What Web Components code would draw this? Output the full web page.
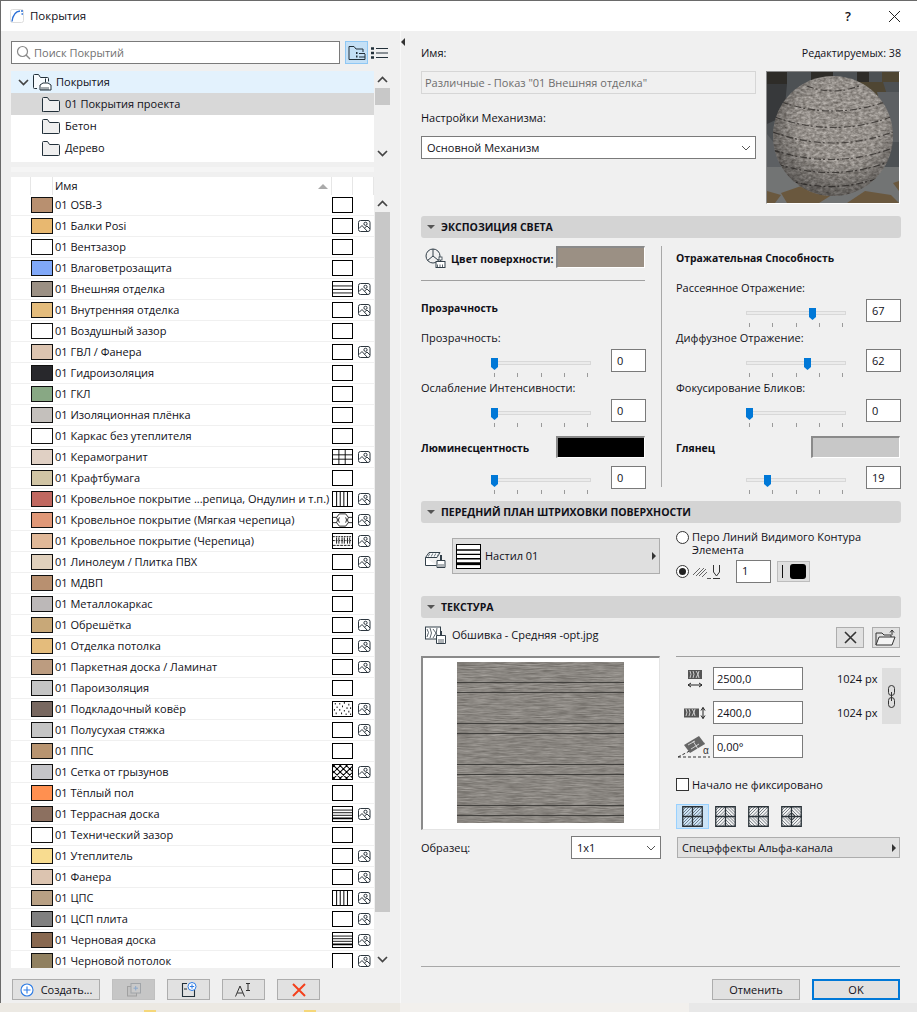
<!DOCTYPE html>
<html lang="ru">
<head>
<meta charset="utf-8">
<title>Покрытия</title>
<style>
html, body { margin: 0; height: 1012px; overflow: hidden; }
body {
    font: 11px/16px "Open Sans", "Liberation Sans", sans-serif; color: #101018;
    background:
        linear-gradient(#f5d77a, #f5d77a) 144px 1010px / 12px 2px no-repeat,
        linear-gradient(#f5d77a, #f5d77a) 304px 1010px / 12px 2px no-repeat,
        linear-gradient(90deg, #ece9e3 0 400px, #f2f0ed 400px 689px, #e8e8e8 689px);
}
</style>
</head>
<body>

<x-dialog>
  <x-sidebar slot="left"></x-sidebar>
  <x-settings slot="right"></x-settings>
</x-dialog>

<script>
const ICONS = {
    logo: [14, 14, `<rect x=".5" y=".5" width="13" height="13" rx="2" fill="#fff" stroke="#ddd"/><path d="M2 12.500C2.800 6.500 5.500 2.500 10 2" fill="none" stroke="#2b6fd6" stroke-width="1.400"/><path d="M11 2h2M11.500 5h1.500" stroke="#2b6fd6" stroke-width="1.300"/>`],
    search: [15, 15, `<circle cx="6.500" cy="6.500" r="5" fill="none" stroke="#8a8a8a" stroke-width="1.200"/><path d="M10 10l4 4" stroke="#8a8a8a" stroke-width="1.400"/>`],
    treemode: [18, 16, `<path d="M1 14.500V1.500h5l2 2.500h7v3M1 14.500h16V9" fill="none" stroke="#22303a"/><path d="M8 8h1.500M8 11.500h1.500" stroke="#22303a" stroke-width="2"/><path d="M11 8.500h6M11 12h6" stroke="#22303a"/>`],
    listmode: [17, 12, `<path d="M0 1.500h3M0 6h3M0 10.500h3" stroke="#22303a" stroke-width="2.400"/><path d="M5 1.500h12M5 6h12M5 10.500h12" stroke="#22303a"/>`],
    chevdown: [11, 7, `<path d="M1 1l4.500 4.500L10 1" fill="none" stroke="#444" stroke-width="1.700"/>`],
    chevup: [11, 7, `<path d="M1 6l4.500-4.500L10 6" fill="none" stroke="#444" stroke-width="1.700"/>`],
    folder: [18, 15, `<path d="M.5 14.500V1.500Q.5.500 1.500.500h4l2 3h9q1 0 1 1v9q0 1-1 1H1.500q-1 0-1-1z" fill="#efefef" stroke="#22303a"/>`],
    rootfolder: [19, 17, `<path d="M4 14.500H1.500q-1 0-1-1V1.500q0-1 1-1h4l2 3h7q1 0 1 1v3" fill="#f7fbfe" stroke="#22303a"/><path d="M12.500 4.500v4M10 9h5l3 2v5H7v-5z" fill="#fff" stroke="#22303a"/><path d="M9 13v3M11 13v3M13 13v3M15 13v3" stroke="#22303a" stroke-width=".8"/>`],
    image: [13, 12, `<rect x=".5" y=".5" width="11.500" height="11" rx="2" fill="#fff" stroke="#2c363e"/><circle cx="7.500" cy="3.800" r="1.600" fill="none" stroke="#2c363e"/><path d="M1 8.500L4 5.500l5.500 6M6.500 8l2.500-2 3 3" fill="none" stroke="#2c363e"/>`],
    plus: [14, 14, `<circle cx="7" cy="7" r="6" fill="#fff" stroke="#2c7be5" stroke-width="1.100"/><path d="M7 3.500v7M3.500 7h7" stroke="#2c7be5" stroke-width="1.100"/>`],
    dup: [14, 14, `<rect x=".5" y="3.500" width="9" height="9.500" fill="#c2c2c2" stroke="#a0a0a0"/><rect x="4" y=".5" width="9.500" height="9.500" fill="#c9c9c9" stroke="#a0a4a8"/><path d="M8.700 3v4.500M6.500 5.200h4.500" stroke="#8aa8cc"/>`],
    newfolder: [16, 15, `<path d="M6 1.500H1.500v13h12V8" fill="none" stroke="#22303a" stroke-width="1.100"/><path d="M3 7h3" stroke="#22303a"/><circle cx="11" cy="4.500" r="4" fill="#fff" stroke="#2c7be5"/><path d="M11 2.300v4.400M8.800 4.500h4.400" stroke="#2c7be5"/>`],
    rename: [17, 14, `<path d="M.5 13.500L5 3l4.500 10.500M2.200 10h5.600" fill="none" stroke="#333"/><path d="M11 .5h4M13 .5v7M11 7.500h4" stroke="#333"/>`],
    redx: [14, 14, `<path d="M1 1l12 12M13 1L1 13" stroke="#f4401c" stroke-width="2"/>`],
    wheel: [21, 20, `<circle cx="8" cy="8" r="7" fill="none" stroke="#33404a"/><path d="M8 1v7L2.500 12.500M8 8l5 4" fill="none" stroke="#33404a"/><rect x="11" y="13.500" width="9" height="6" fill="#fff" stroke="#33404a"/><path d="M15.500 9v4.500M12.500 16.500v3M15 16.500v3M17.500 16.500v3" stroke="#33404a" stroke-width=".8"/><rect x="14" y="9" width="3" height="3" fill="#fff" stroke="#33404a" stroke-width=".8"/>`],
    hatch: [21, 17, `<path d="M.5 6.500L4 1.500h11l-3 5H.5v8h11" fill="#fff" stroke="#33404a"/><path d="M3 5.500l2-3M6 5.500l2-3M9 5.500l2-3M12 5.500l2-3" stroke="#7a868e" stroke-width="1.100"/><path d="M16 4v5" stroke="#33404a" stroke-width="2"/><path d="M12 9.500h8v7h-8z" fill="#fff" stroke="#33404a"/><path d="M14 13v3M16 13v3M18 13v3" stroke="#33404a" stroke-width=".8"/>`],
    penhatch: [28, 15, `<path d="M0 11l7-7M3 12l8-8M6 12l7-7M9 13l5-5" stroke="#555" stroke-width=".9"/><path d="M14 14.500h4" stroke="#333" stroke-width=".8"/><path d="M20 14.500h7M20.500 1v7l3 4 3-4V1" fill="none" stroke="#333"/>`],
    texture: [21, 19, `<rect x=".5" y="1" width="15" height="12" fill="#fff" stroke="#33404a"/><path d="M2 3q3 3 0 8M5 2q3 5 0 10M8 3l3 4-3 5M12 2q-2 5 1 10" fill="none" stroke="#33404a" stroke-width=".8"/><path d="M16 5v4" stroke="#33404a" stroke-width="2"/><path d="M11.500 9.500h9v8h-9z" fill="#fff" stroke="#33404a"/><path d="M14 13v4M16 13v4M18 13v4" stroke="#33404a" stroke-width=".8"/>`],
    close: [13, 13, `<path d="M1 1l11 11M12 1L1 12" stroke="#333" stroke-width="1.600"/>`],
    xthin: [13, 13, `<path d="M1 1l11 11M12 1L1 12" stroke="#222"/>`],
    open: [22, 17, `<path d="M1 16V4h6l2 2h7v2" fill="none" stroke="#333"/><path d="M1 16l3-8h16l-3 8z" fill="#f4f4f4" stroke="#333"/><path d="M17 6V1.500M15 3.500l2-2.500 2 2.500" fill="none" stroke="#333"/>`],
    texw: [16, 18, `<rect x="1" y="0" width="14" height="9" fill="#555"/><path d="M3 1q2 3 0 7M6 1q2 3 0 7M9 1l2 3-2 4M12 1q-2 3 0 7" fill="none" stroke="#ddd" stroke-width=".9"/><path d="M1 15h14M1 15l3-2M1 15l3 2M15 15l-3-2M15 15l-3 2" stroke="#222"/>`],
    texh: [22, 12, `<rect x="0" y="1.500" width="15" height="9" fill="#555"/><path d="M2 2q2 3 0 7M5 2q2 3 0 7M8 2l2 3-2 4M11 2q-2 3 0 7" fill="none" stroke="#ddd" stroke-width=".9"/><path d="M19 .5v11M19 .5l-2 3M19 .5l2 3M19 11.500l-2-3M19 11.500l2-3" stroke="#222"/>`],
    texa: [33, 23, `<path d="M0 22L27 8" stroke="#333" stroke-dasharray="3 2"/><path d="M0 22h32" stroke="#333" stroke-dasharray="3 2"/><path d="M6 10L21 1l6 8-15 9z" fill="#666"/><path d="M10 10l7-4M13 14l8-5M15 6l5 8" stroke="#ddd" stroke-width=".9"/><text x="25" y="19" font-size="10" font-family="Liberation Sans" fill="#333">α</text>`],
    link: [9, 23, `<path d="M1.500 3.500a3 3 0 0 1 6 0v4a3 3 0 0 1-6 0zM1.500 15.500a3 3 0 0 1 6 0v4a3 3 0 0 1-6 0zM4.500 7v9" fill="none" stroke="#333"/>`],
    tridown: [8, 4, `<path d="M0 0h8L4 4z" fill="#555"/>`],
    triright: [4, 8, `<path d="M0 0v8l4-4z" fill="#333"/>`],
    trileft: [4, 8, `<path d="M4 0v8L0 4z" fill="#333"/>`],
    sort: [10, 5, `<path d="M0 5h10L5 0z" fill="#aaa"/>`],
    selchev: [10, 6, `<path d="M1 1l4 4 4-4" fill="none" stroke="#555"/>`],
};

// 4 hatched cells, r = "/" and l = "\"
function alignIcon(kind) {
    const r = 'M0 3L3 0M0 6L6 0M0 9L9 0M3 9.500L9.500 3M6 9.500L9.500 6';
    const l = 'M9.500 3L6.500 0M9.500 6L3.500 0M9.500 9L.5 0M6.500 9.500L0 3M3.500 9.500L0 6';
    const cells = { a: [r, r, r, r], b: [r, l, r, l], c: [r, r, l, l], d: [r, l, l, r] }[kind];
    let s = '';
    cells.forEach((d, i) => {
        s += `<path transform="translate(${i % 2 ? 11 : 1} ${i > 1 ? 11 : 1})" d="${d}" fill="none" stroke="#5c666e" stroke-width=".8"/>`;
    });
    s += '<path d="M.75.75h19.500v19.500H.75zM10.500 0v21M0 10.500h21" fill="none" stroke="#2a3238" stroke-width="1.300"/>';
    if (kind === 'd') s += '<circle cx="10.500" cy="10.500" r="3" fill="none" stroke="#2a3238"/>';
    return s;
}

customElements.define('x-icon', class extends HTMLElement {
    connectedCallback() {
        const name = this.getAttribute('name');
        const [w, h, body] = name.startsWith('align-')
            ? [21, 21, alignIcon(name.slice(6))]
            : ICONS[name];
        this.attachShadow({ mode: 'open' }).innerHTML = `
        <style>:host { display: inline-flex; flex: none; } svg { display: block; }</style>
        <svg width="${w}" height="${h}" viewBox="0 0 ${w} ${h}">${body}</svg>`;
    }
});

customElements.define('x-dialog', class extends HTMLElement {
    constructor() {
        super();
        this.attachShadow({ mode: 'open' }).innerHTML = `
        <style>
        :host { display: block; width: 917px; height: 1003px; box-sizing: border-box;
            border-top: 1px solid #6a6a6a; border-left: 1px solid #6a6a6a; background: #f0f0f0; }
        #title { height: 30px; background: #fff; display: flex; align-items: center; padding-left: 9px; font-size: 11.500px; }
        #name { margin-left: 6px; flex: 1; }
        #help { width: 46px; text-align: center; font-size: 13px; font-weight: 600; }
        #x { width: 46px; display: flex; justify-content: center; }
        #main { display: flex; height: 972px; }
        ::slotted([slot=left]) { width: 399px; flex: none; }
        ::slotted([slot=right]) { flex: 1; }
        #arrow { width: 21px; padding-top: 3px; border-left: 1px solid #f8f8f8; box-sizing: border-box; flex: none; }
        </style>
        <div id="title"><x-icon name="logo"></x-icon><span id="name">Покрытия</span><span id="help">?</span><div id="x"><x-icon name="xthin"></x-icon></div></div>
        <div id="main">
            <slot name="left"></slot>
            <div id="arrow"><x-icon name="trileft"></x-icon></div>
            <slot name="right"></slot>
        </div>`;
    }
});

customElements.define('x-scrollbar', class extends HTMLElement {
    connectedCallback() {
        const top = this.getAttribute('top') || 0;
        const thumb = this.getAttribute('thumb');
        this.attachShadow({ mode: 'open' }).innerHTML = `
        <style>
        :host { display: flex; flex-direction: column; width: 15px; flex: none; padding-top: ${top}px; box-sizing: border-box; }
        .a { height: 17px; display: flex; align-items: center; justify-content: center; }
        #t { height: ${thumb}px; background: #c8c8c8; }
        #s { flex: 1; }
        </style>
        <div class="a"><x-icon name="chevup"></x-icon></div>
        <div id="t"></div><div id="s"></div>
        <div class="a"><x-icon name="chevdown"></x-icon></div>`;
    }
});

customElements.define('x-tree-row', class extends HTMLElement {
    constructor() {
        super();
        this.attachShadow({ mode: 'open' }).innerHTML = `
        <style>
        :host { display: flex; align-items: center; height: 22px; background: #fff; padding-left: 31px; gap: 5px; }
        :host([root]) { background: #e3f2fd; padding-left: 7px; gap: 4px; }
        :host([selected]) { background: #d8d8d8; }
        :host([root]) #c { display: inline-flex; }
        #c { display: none; }
        </style>
        <x-icon id="c" name="chevdown"></x-icon>
        <x-icon name="${this.hasAttribute('root') ? 'rootfolder' : 'folder'}"></x-icon>
        <slot></slot>`;
    }
});

const netLines = [-14, -7, 0, 7, 14].map(k => `M${k} 16L${k + 16} 0M${k} 0L${k + 16} 16`).join('');
const FILLS = {
    hlines: '<path d="M0 4.500h21M0 8.500h21M0 12.500h21" stroke="#000"/>',
    boards: '<path d="M0 3.500h21M0 6.500h21M0 9.500h21" stroke="#000"/><path d="M0 13h21" stroke="#000" stroke-width="2"/>',
    grid: '<path d="M0 5.500h21M0 10.500h21M6.500 0v16M13.500 0v16" stroke="#000"/>',
    vlines: '<path d="M4 0v16M8 0v16M12 0v16M16 0v16" stroke="#000" stroke-width="1.100"/>',
    round: '<path d="M0 5h4l3-4h7l3 4h4M0 11h4l3 4h7l3-4h4M4 5q2 3 0 6M7 5q-2 3 0 6M14 5q2 3 0 6M17 5q-2 3 0 6" fill="none" stroke="#000" stroke-width=".9"/>',
    tile: '<path d="M0 3h21M0 7.500h21" stroke="#000" stroke-dasharray="2 1"/><path d="M4 4v8M6.500 4v8M10 4v8M12.500 4v8M16 4v8M18.500 4v8M0 13h21" stroke="#000" stroke-dasharray="3 1"/>',
    dots: '<path d="M2 2h1M7 2h1M12 1h1M17 3h1M4 6h1M10 5h1M15 7h1M19 7h1M1 9h1M7 9h1M12 10h1M17 11h1M3 13h1M9 13h1M14 14h1M19 14h1" stroke="#000" stroke-width="1.800"/>',
    cross: `<path d="${netLines}" stroke="#000" stroke-width="1.200"/>`,
};

customElements.define('x-fill', class extends HTMLElement {
    connectedCallback() {
        const k = this.getAttribute('kind');
        const w = this.getAttribute('w') || 21, h = this.getAttribute('h') || 16;
        this.attachShadow({ mode: 'open' }).innerHTML = `
        <style>:host { display: block; flex: none; } svg { display: block; background: #fff; border: 1px solid #000; box-sizing: border-box; }</style>
        <svg width="${w}" height="${h}" viewBox="0 0 21 16" preserveAspectRatio="none">${FILLS[k] || ''}</svg>`;
    }
});

const MATERIALS = [
    ['01 OSB-3', '#b89070', '', 0],
    ['01 Балки Posi', '#e8b870', '', 1],
    ['01 Вентзазор', '#fff', '', 0],
    ['01 Влаговетрозащита', '#80a8f8', '', 0],
    ['01 Внешняя отделка', '#9b9084', 'hlines', 1],
    ['01 Внутренняя отделка', '#e4bc7c', '', 1],
    ['01 Воздушный зазор', '#fff', '', 0],
    ['01 ГВЛ / Фанера', '#dcc4b0', '', 1],
    ['01 Гидроизоляция', '#28282c', '', 0],
    ['01 ГКЛ', '#88a884', '', 0],
    ['01 Изоляционная плёнка', '#c4c0bc', '', 0],
    ['01 Каркас без утеплителя', '#fff', '', 0],
    ['01 Керамогранит', '#e0d0c4', 'grid', 1],
    ['01 Крафтбумага', '#d0c4a4', '', 0],
    ['01 Кровельное покрытие ...репица, Ондулин и т.п.)', '#c06860', 'vlines', 1],
    ['01 Кровельное покрытие (Мягкая черепица)', '#e09878', 'round', 1],
    ['01 Кровельное покрытие (Черепица)', '#e0b898', 'tile', 1],
    ['01 Линолеум / Плитка ПВХ', '#e0d0bc', '', 1],
    ['01 МДВП', '#b89070', '', 0],
    ['01 Металлокаркас', '#bcb8b8', '', 0],
    ['01 Обрешётка', '#c8a878', '', 1],
    ['01 Отделка потолка', '#e4bc7c', '', 1],
    ['01 Паркетная доска / Ламинат', '#bc9c80', '', 1],
    ['01 Пароизоляция', '#c4c4c4', '', 0],
    ['01 Подкладочный ковёр', '#786860', 'dots', 1],
    ['01 Полусухая стяжка', '#c4c4c4', '', 1],
    ['01 ППС', '#b89470', '', 0],
    ['01 Сетка от грызунов', '#c4c4c8', 'cross', 1],
    ['01 Тёплый пол', '#ff9050', '', 0],
    ['01 Террасная доска', '#8c7060', 'boards', 1],
    ['01 Технический зазор', '#fff', '', 0],
    ['01 Утеплитель', '#f8dc90', '', 1],
    ['01 Фанера', '#dcc4b0', '', 1],
    ['01 ЦПС', '#b8a084', 'vlines', 1],
    ['01 ЦСП плита', '#808080', '', 1],
    ['01 Черновая доска', '#886850', 'boards', 1],
    ['01 Черновой потолок', '#908060', '', 1],
];

customElements.define('x-material-list', class extends HTMLElement {
    connectedCallback() {
        const rows = MATERIALS.map(([name, color, fill, img]) => `
            <div class="r">
                <i style="background:${color}"></i>
                <span>${name}</span>
                <x-fill kind="${fill}"></x-fill>
                <b>${img ? '<x-icon name="image"></x-icon>' : ''}</b>
            </div>`).join('');
        this.attachShadow({ mode: 'open' }).innerHTML = `
        <style>
        :host { display: block; height: 791px; width: 363px; background: #fff; overflow: hidden; flex: none; }
        #h { display: grid; grid-template-columns: 20px 22px 279px 21px 21px; height: 18px; }
        #h div { border-right: 1px solid #e6e6e6; box-sizing: border-box; }
        #n { padding-left: 2px; display: flex; justify-content: space-between; align-items: center; padding-right: 3px; }
        .r { display: grid; grid-template-columns: 20px 22px 279px 21px 21px; height: 21px; box-sizing: border-box;
            border-bottom: 1px solid #f0f0f0; align-items: center; }
        i { grid-column: 2; height: 16px; border: 1px solid #111; box-sizing: border-box; }
        span { padding-left: 2px; white-space: nowrap; overflow: hidden; }
        b { display: flex; justify-content: center; font-weight: normal; padding-left: 1px; }
        </style>
        <div id="h"><div></div><div></div><div id="n">Имя<x-icon name="sort"></x-icon></div><div></div><div></div></div>
        ${rows}`;
    }
});

customElements.define('x-tool', class extends HTMLElement {
    constructor() {
        super();
        this.attachShadow({ mode: 'open' }).innerHTML = `
        <style>
        :host { display: flex; align-items: center; justify-content: center; gap: 7px; box-sizing: border-box;
            height: 21px; background: #e1e1e1; border: 1px solid #adadad; flex: none; }
        :host([disabled]) { background: #c6c6c6; border-color: #c0c0c0; }
        :host([primary]) { border: 2px solid #0078d7; }
        </style>
        <slot></slot>`;
    }
});

customElements.define('x-sidebar', class extends HTMLElement {
    constructor() {
        super();
        this.attachShadow({ mode: 'open' }).innerHTML = `
        <style>
        :host { display: block; padding: 10px 0 0 10px; box-sizing: border-box; }
        .row { display: flex; }
        #search { width: 329px; height: 23px; box-sizing: border-box; border: 1px solid #7a7a7a; background: #fff; color: #707070;
            display: flex; align-items: center; gap: 3px; padding-left: 4px; }
        #treemode { width: 23px; height: 23px; margin-left: 5px; box-sizing: border-box; background: #c4e0f6; border: 1px solid #90c8f4;
            display: flex; align-items: center; justify-content: center; }
        #listmode { margin-left: 3px; display: flex; align-items: center; }
        #tree { margin-top: 7px; height: 91px; }
        #treebox { width: 363px; background: #fff; }
        #strip { height: 5px; width: 363px; margin: 5px 0; background: #f5f5f5; }
        x-scrollbar { margin-left: 1px; }
        #tools { margin-top: 11px; margin-left: 1px; gap: 12px; }
        </style>
        <div class="row">
            <div id="search"><x-icon name="search"></x-icon>Поиск Покрытий</div>
            <div id="treemode"><x-icon name="treemode"></x-icon></div>
            <div id="listmode"><x-icon name="listmode"></x-icon></div>
        </div>
        <div class="row" id="tree">
            <div id="treebox">
                <x-tree-row root>Покрытия</x-tree-row>
                <x-tree-row selected>01 Покрытия проекта</x-tree-row>
                <x-tree-row>Бетон</x-tree-row>
                <x-tree-row>Дерево</x-tree-row>
            </div>
            <x-scrollbar thumb="17"></x-scrollbar>
        </div>
        <div id="strip"></div>
        <div class="row">
            <x-material-list></x-material-list>
            <x-scrollbar top="18" thumb="700"></x-scrollbar>
        </div>
        <div class="row" id="tools">
            <x-tool style="width:88px"><x-icon name="plus"></x-icon>Создать...</x-tool>
            <x-tool style="width:43px" disabled><x-icon name="dup"></x-icon></x-tool>
            <x-tool style="width:43px"><x-icon name="newfolder"></x-icon></x-tool>
            <x-tool style="width:43px"><x-icon name="rename"></x-icon></x-tool>
            <x-tool style="width:43px"><x-icon name="redx"></x-icon></x-tool>
        </div>`;
    }
});

customElements.define('x-section', class extends HTMLElement {
    connectedCallback() {
        this.attachShadow({ mode: 'open' }).innerHTML = `
        <style>
        :host { display: block; }
        #h { height: 22px; background: #d4d4d4; border-radius: 3px; display: flex; align-items: center; gap: 6px; padding-left: 6px;
            font-weight: 700; font-size: 10.500px; }
        </style>
        <div id="h"><x-icon name="tridown"></x-icon>${this.getAttribute('label')}</div>
        <slot></slot>`;
    }
});

customElements.define('x-field', class extends HTMLElement {
    constructor() {
        super();
        this.attachShadow({ mode: 'open' }).innerHTML = `
        <style>
        :host { display: flex; align-items: center; box-sizing: border-box; height: 23px; width: 35px; padding-left: 5px;
            background: #fff; border: 1px solid #7a7a7a; flex: none; }
        </style>
        <slot></slot>`;
    }
});

customElements.define('x-slider', class extends HTMLElement {
    connectedCallback() {
        const v = Number(this.getAttribute('value'));
        this.attachShadow({ mode: 'open' }).innerHTML = `
        <style>
        :host { display: flex; height: 23px; align-items: flex-start; justify-content: flex-end; gap: 20px; }
        #s { position: relative; width: 100px; height: 23px; }
        #t { margin-top: 12px; height: 2px; background: #ebebeb; border: 1px solid #d8d8d8; }
        #k { margin-top: 8px; padding: 0 3px; display: flex; justify-content: space-between; }
        #k i { width: 1px; height: 4px; background: #9a9a9a; }
        svg { position: absolute; top: 9px; left: ${(v * 0.94).toFixed(1)}px; }
        </style>
        <div id="s">
            <div id="t"></div>
            <div id="k"><i></i><i></i><i></i><i></i><i></i></div>
            <svg width="7" height="12" viewBox="0 0 7 12"><path d="M0 0h7v9l-3.500 3L0 9z" fill="#0078d7"/></svg>
        </div>
        <x-field>${v}</x-field>`;
    }
});

customElements.define('x-swatch', class extends HTMLElement {
    constructor() {
        super();
        this.attachShadow({ mode: 'open' }).innerHTML = `
        <style>
        :host { display: block; width: 89px; height: 22px; box-sizing: border-box; flex: none;
            border: 1px solid #fff; border-top: 2px solid #8a8a8a; border-left: 2px solid #8a8a8a; }
        </style>`;
    }
});

customElements.define('x-exposure', class extends HTMLElement {
    constructor() {
        super();
        this.attachShadow({ mode: 'open' }).innerHTML = `
        <style>
        :host { display: grid; grid-template-columns: 225px 15px 1px 14px 225px; padding-top: 8px; }
        #d { grid-column: 3; background: #a8a8a8; height: 241px; }
        #r { grid-column: 5; }
        .head { display: flex; align-items: flex-start; justify-content: space-between; box-sizing: border-box; height: 22px; padding: 4px 1px 0 0;
            font-weight: 700; font-size: 10.400px; white-space: nowrap; }
        .head div { display: flex; align-items: center; gap: 5px; padding-left: 4px; }
        .head x-swatch { margin-top: -4px; }
        .head x-icon { margin-top: -2px; }
        hr { margin: 12px 0 0; border: 0; height: 1px; background: #a0a0a0; width: 224px; }
        .title { margin: 19px 0 6px; font-weight: 700; font-size: 10.400px; }
        .lbl { padding: 8px 0 3px; white-space: nowrap; }
        .first { padding-top: 12px; }
        .gap { margin-top: 14px; margin-bottom: 8px; }
        </style>
        <div>
            <div class="head"><div><x-icon name="wheel"></x-icon>Цвет поверхности:</div><x-swatch style="background:#9b9084"></x-swatch></div>
            <hr>
            <div class="title">Прозрачность</div>
            <div class="lbl">Прозрачность:</div>
            <x-slider value="0"></x-slider>
            <div class="lbl">Ослабление Интенсивности:</div>
            <x-slider value="0"></x-slider>
            <div class="head gap">Люминесцентность<x-swatch style="background:#000"></x-swatch></div>
            <x-slider value="0"></x-slider>
        </div>
        <div id="d"></div>
        <div id="r">
            <div class="head">Отражательная Способность</div>
            <div class="lbl first">Рассеянное Отражение:</div>
            <x-slider value="67"></x-slider>
            <div class="lbl">Диффузное Отражение:</div>
            <x-slider value="62"></x-slider>
            <div class="lbl">Фокусирование Бликов:</div>
            <x-slider value="0"></x-slider>
            <div class="head gap">Глянец<x-swatch style="background:#c8c8c8"></x-swatch></div>
            <x-slider value="19"></x-slider>
        </div>`;
    }
});

customElements.define('x-radio', class extends HTMLElement {
    constructor() {
        super();
        this.attachShadow({ mode: 'open' }).innerHTML = `
        <style>
        :host { display: block; width: 13px; height: 13px; flex: none; box-sizing: border-box; border: 1px solid #333; border-radius: 50%; background: #fff; padding: 2px; }
        :host([on]) div { width: 7px; height: 7px; border-radius: 50%; background: #222; }
        </style>
        <div></div>`;
    }
});

customElements.define('x-surface', class extends HTMLElement {
    constructor() {
        super();
        this.attachShadow({ mode: 'open' }).innerHTML = `
        <style>
        :host { display: grid; grid-template-columns: 239px 225px; column-gap: 16px; padding: 7px 0 13px; height: 53px; }
        #l { display: flex; align-items: flex-start; }
        #i { width: 31px; box-sizing: border-box; padding: 21px 0 0 4px; flex: none; }
        #b { width: 208px; height: 36px; margin-top: 8px; box-sizing: border-box; background: #dfdfdf; border: 1px solid #adadad;
            display: flex; align-items: center; padding-left: 3px; gap: 4px; }
        #b span { flex: 1; }
        #b x-icon { margin-right: 3px; }
        #o { display: flex; gap: 3px; line-height: 13px; }
        #o x-radio { margin-top: 1px; }
        #p { display: flex; align-items: center; margin-top: 4px; height: 22px; }
        #p x-icon { margin: 0 15px 0 4px; }
        #pen { margin-left: 6px; width: 33px; height: 21px; box-sizing: border-box; background: #dfdfdf; border: 1px solid #bdbdbd; display: flex; align-items: center; justify-content: center; gap: 7px; }
        #pen i { width: 1px; height: 13px; background: #111; }
        #pen b { width: 16px; height: 15px; border-radius: 3px; background: #000; }
        </style>
        <div id="l">
            <div id="i"><x-icon name="hatch"></x-icon></div>
            <div id="b"><x-fill kind="boards" w="25" h="25"></x-fill><span>Настил 01</span><x-icon name="triright"></x-icon></div>
        </div>
        <div>
            <div id="o"><x-radio></x-radio><div>Перо Линий Видимого Контура<br>Элемента</div></div>
            <div id="p"><x-radio on></x-radio><x-icon name="penhatch"></x-icon><x-field>1</x-field><div id="pen"><i></i><b></b></div></div>
        </div>`;
    }
});

customElements.define('x-wood', class extends HTMLElement {
    constructor() {
        super();
        const lines = [20, 30, 61, 71, 102, 112, 143, 153].map(y =>
            `<path d="M0 ${y}.5h167" stroke="#3a3836" stroke-opacity=".9"/>`).join('');
        this.attachShadow({ mode: 'open' }).innerHTML = `
        <style>:host { display: block; flex: none; } svg { display: block; }</style>
        <svg width="167" height="161" viewBox="0 0 167 161">
            <filter id="w" x="0" y="0" width="100%" height="100%" color-interpolation-filters="sRGB">
                <feTurbulence type="fractalNoise" baseFrequency="0.06 1.1" numOctaves="3" seed="4"/>
                <feColorMatrix values=".28 0 0 0 .4 .28 0 0 0 .385 .28 0 0 0 .365 0 0 0 0 1"/>
            </filter>
            <rect width="167" height="161" filter="url(#w)"/>
            ${lines}
        </svg>`;
    }
});

customElements.define('x-sphere', class extends HTMLElement {
    constructor() {
        super();
        this.attachShadow({ mode: 'open' }).innerHTML = `
        <style>:host { display: block; flex: none; box-sizing: border-box; width: 134px; height: 133px; border: 1px solid #fff; border-top: 1px solid #8a8a8a; border-left: 1px solid #8a8a8a; } svg { display: block; }</style>
        <svg width="132" height="131" viewBox="0 0 132 131">
            <defs>
                <filter id="n" x="0" y="0" width="100%" height="100%" color-interpolation-filters="sRGB">
                    <feTurbulence type="fractalNoise" baseFrequency="0.25 0.4" numOctaves="3" seed="8"/>
                    <feColorMatrix values=".45 0 0 0 .36 .45 0 0 0 .34 .45 0 0 0 .32 0 0 0 0 1"/>
                </filter>
                <radialGradient id="s" cx=".55" cy=".38" r=".62">
                    <stop offset=".5" stop-color="#000" stop-opacity="0"/>
                    <stop offset="1" stop-color="#000" stop-opacity=".45"/>
                </radialGradient>
                <clipPath id="c"><circle cx="66" cy="64" r="60"/></clipPath>
            </defs>
            <rect width="132" height="131" fill="#4d5154"/>
            <path d="M0 0h20v12H0zM44 0h22v10H44zM90 0h12v10H90z" fill="#2e2c28"/>
            <path d="M90 10h26l5 16-25-2zM115 0h17v10h-17z" fill="#4f4633"/>
            <path d="M0 12h20l-3 32-17 8z" fill="#37393b"/>
            <path d="M0 62l25 32-25 8zM110 20h22v50h-10z" fill="#5d6063"/>
            <path d="M0 95h132v36H0z" fill="#727474"/>
            <path d="M20 131l-6-10 26-9 28 9-16 10zM80 131l18-12 26 4 8 8zM0 119l14 4-6 8H0zM126 111l6-2v10z" fill="#6a583e"/>
            <g clip-path="url(#c)">
                <rect width="132" height="131" filter="url(#n)"/>
                <g fill="none" stroke="#35312e" stroke-width="1.200" stroke-dasharray="7 2 2 3" stroke-opacity=".8">
                    <path d="M14 30Q66 48 118 30"/><path d="M8 45Q66 66 124 45"/>
                    <path d="M6 60Q66 82 126 60"/><path d="M6 78Q66 98 126 76"/>
                    <path d="M10 92Q66 110 122 90"/><path d="M20 108Q66 122 112 106"/>
                    <path d="M40 14Q66 24 92 14"/>
                </g>
                <rect width="132" height="131" fill="url(#s)"/>
            </g>
        </svg>`;
    }
});

customElements.define('x-select', class extends HTMLElement {
    constructor() {
        super();
        this.attachShadow({ mode: 'open' }).innerHTML = `
        <style>
        :host { display: flex; align-items: center; justify-content: space-between; box-sizing: border-box; height: 23px;
            padding: 0 4px 0 5px; background: #fff; border: 1px solid #7a7a7a; flex: none; }
        </style>
        <slot></slot><x-icon name="selchev"></x-icon>`;
    }
});

customElements.define('x-texture', class extends HTMLElement {
    constructor() {
        super();
        this.attachShadow({ mode: 'open' }).innerHTML = `
        <style>
        :host { display: block; padding-top: 9px; }
        #top { display: flex; align-items: flex-start; height: 21px; gap: 6px; padding-left: 4px; }
        #top > x-icon { margin-top: -1px; }
        #top span { flex: 1; }
        #top x-tool { width: 28px; margin-right: 1px; }
        #top x-tool + x-tool { margin-left: 1px; }
        #grid { display: grid; grid-template-columns: 240px 225px; column-gap: 15px; margin-top: 8px; }
        #pv { box-sizing: border-box; width: 239px; height: 174px; background: #fff; padding: 4px 0 0 34px;
            border: 1px solid #e4e4e4; border-top: 2px solid #8a8a8a; border-left: 2px solid #8a8a8a; }
        #sample { display: flex; justify-content: space-between; align-items: center; margin-top: 6px; }
        hr { border: 0; height: 1px; background: #a0a0a0; margin: 0 1px 10px 0; }
        #dims { display: grid; grid-template-columns: 37px 90px 34px 45px 19px; grid-template-rows: 23px 23px 23px; row-gap: 11px; align-items: center; }
        #dims x-field { width: 90px; padding-left: 3px; }
        .ic { display: flex; justify-content: center; align-items: center; }
        #link { grid-column: 5; grid-row: 1 / 3; height: 56px; margin-top: 1px; background: #dedede; display: flex; justify-content: center; align-items: center; align-self: start; }
        #chk { display: flex; align-items: center; gap: 3px; margin-top: 20px; height: 13px; }
        #chk i { width: 13px; height: 13px; box-sizing: border-box; border: 1px solid #333; background: #fff; }
        #align { display: flex; margin-top: 13px; height: 25px; }
        #align div { width: 33px; display: flex; align-items: center; justify-content: center; box-sizing: border-box; }
        #align .on { background: #cce4f7; border: 1px solid #99d1ff; }
        #alpha { margin: 8px 1px 0 1px; justify-content: space-between; padding: 0 3px 0 4px; }
        </style>
        <div id="top"><x-icon name="texture"></x-icon><span>Обшивка - Средняя -opt.jpg</span>
            <x-tool><x-icon name="close"></x-icon></x-tool><x-tool><x-icon name="open"></x-icon></x-tool></div>
        <div id="grid">
            <div>
                <div id="pv"><x-wood></x-wood></div>
                <div id="sample">Образец:<x-select style="width:90px">1x1</x-select></div>
            </div>
            <div>
                <hr>
                <div id="dims">
                    <div class="ic"><x-icon name="texw"></x-icon></div><x-field>2500,0</x-field><div></div><div>1024 px</div>
                    <div id="link"><x-icon name="link"></x-icon></div>
                    <div class="ic" style="grid-row:2;grid-column:1"><x-icon name="texh"></x-icon></div><x-field style="grid-row:2;grid-column:2">2400,0</x-field><div style="grid-row:2;grid-column:4">1024 px</div>
                    <div class="ic" style="grid-row:3;grid-column:1"><x-icon name="texa"></x-icon></div><x-field style="grid-row:3;grid-column:2">0,00°</x-field>
                </div>
                <div id="chk"><i></i>Начало не фиксировано</div>
                <div id="align">
                    <div class="on"><x-icon name="align-a"></x-icon></div>
                    <div><x-icon name="align-b"></x-icon></div>
                    <div><x-icon name="align-c"></x-icon></div>
                    <div><x-icon name="align-d"></x-icon></div>
                </div>
                <x-tool id="alpha">Спецэффекты Альфа-канала<x-icon name="triright"></x-icon></x-tool>
            </div>
        </div>`;
    }
});

customElements.define('x-settings', class extends HTMLElement {
    constructor() {
        super();
        this.attachShadow({ mode: 'open' }).innerHTML = `
        <style>
        :host { display: flex; flex-direction: column; box-sizing: border-box; padding: 14px 16px 3px 0; height: 972px; min-width: 0; }
        #top { display: flex; justify-content: space-between; height: 16px; margin-bottom: 10px; }
        #top span + span { font-size: 10.700px; }
        #id { display: grid; grid-template-columns: 335px 134px; column-gap: 10px; }
        #name { box-sizing: border-box; height: 23px; border: 1px solid #d6d6d6; padding-left: 3px; color: #6d6d6d; display: flex; align-items: center; }
        #mech { margin: 16px 0 10px; }
        x-select { width: 335px; }
        x-section { margin-top: 12px; }
        #sp { flex: 1; }
        #foot { border-top: 1px solid #a8a8a8; margin-right: 1px; padding-top: 12px; display: flex; justify-content: flex-end; gap: 12px; }
        #foot x-tool { width: 88px; }
        </style>
        <div id="top"><span>Имя:</span><span>Редактируемых: 38</span></div>
        <div id="id">
            <div>
                <div id="name">Различные - Показ "01 Внешняя отделка"</div>
                <div id="mech">Настройки Механизма:</div>
                <x-select>Основной Механизм</x-select>
            </div>
            <x-sphere></x-sphere>
        </div>
        <x-section label="ЭКСПОЗИЦИЯ СВЕТА"><x-exposure></x-exposure></x-section>
        <x-section label="ПЕРЕДНИЙ ПЛАН ШТРИХОВКИ ПОВЕРХНОСТИ"><x-surface></x-surface></x-section>
        <x-section label="ТЕКСТУРА" style="margin-top:0"><x-texture></x-texture></x-section>
        <div id="sp"></div>
        <div id="foot"><x-tool>Отменить</x-tool><x-tool primary>OK</x-tool></div>`;
    }
});
</script>
</body>
</html>
